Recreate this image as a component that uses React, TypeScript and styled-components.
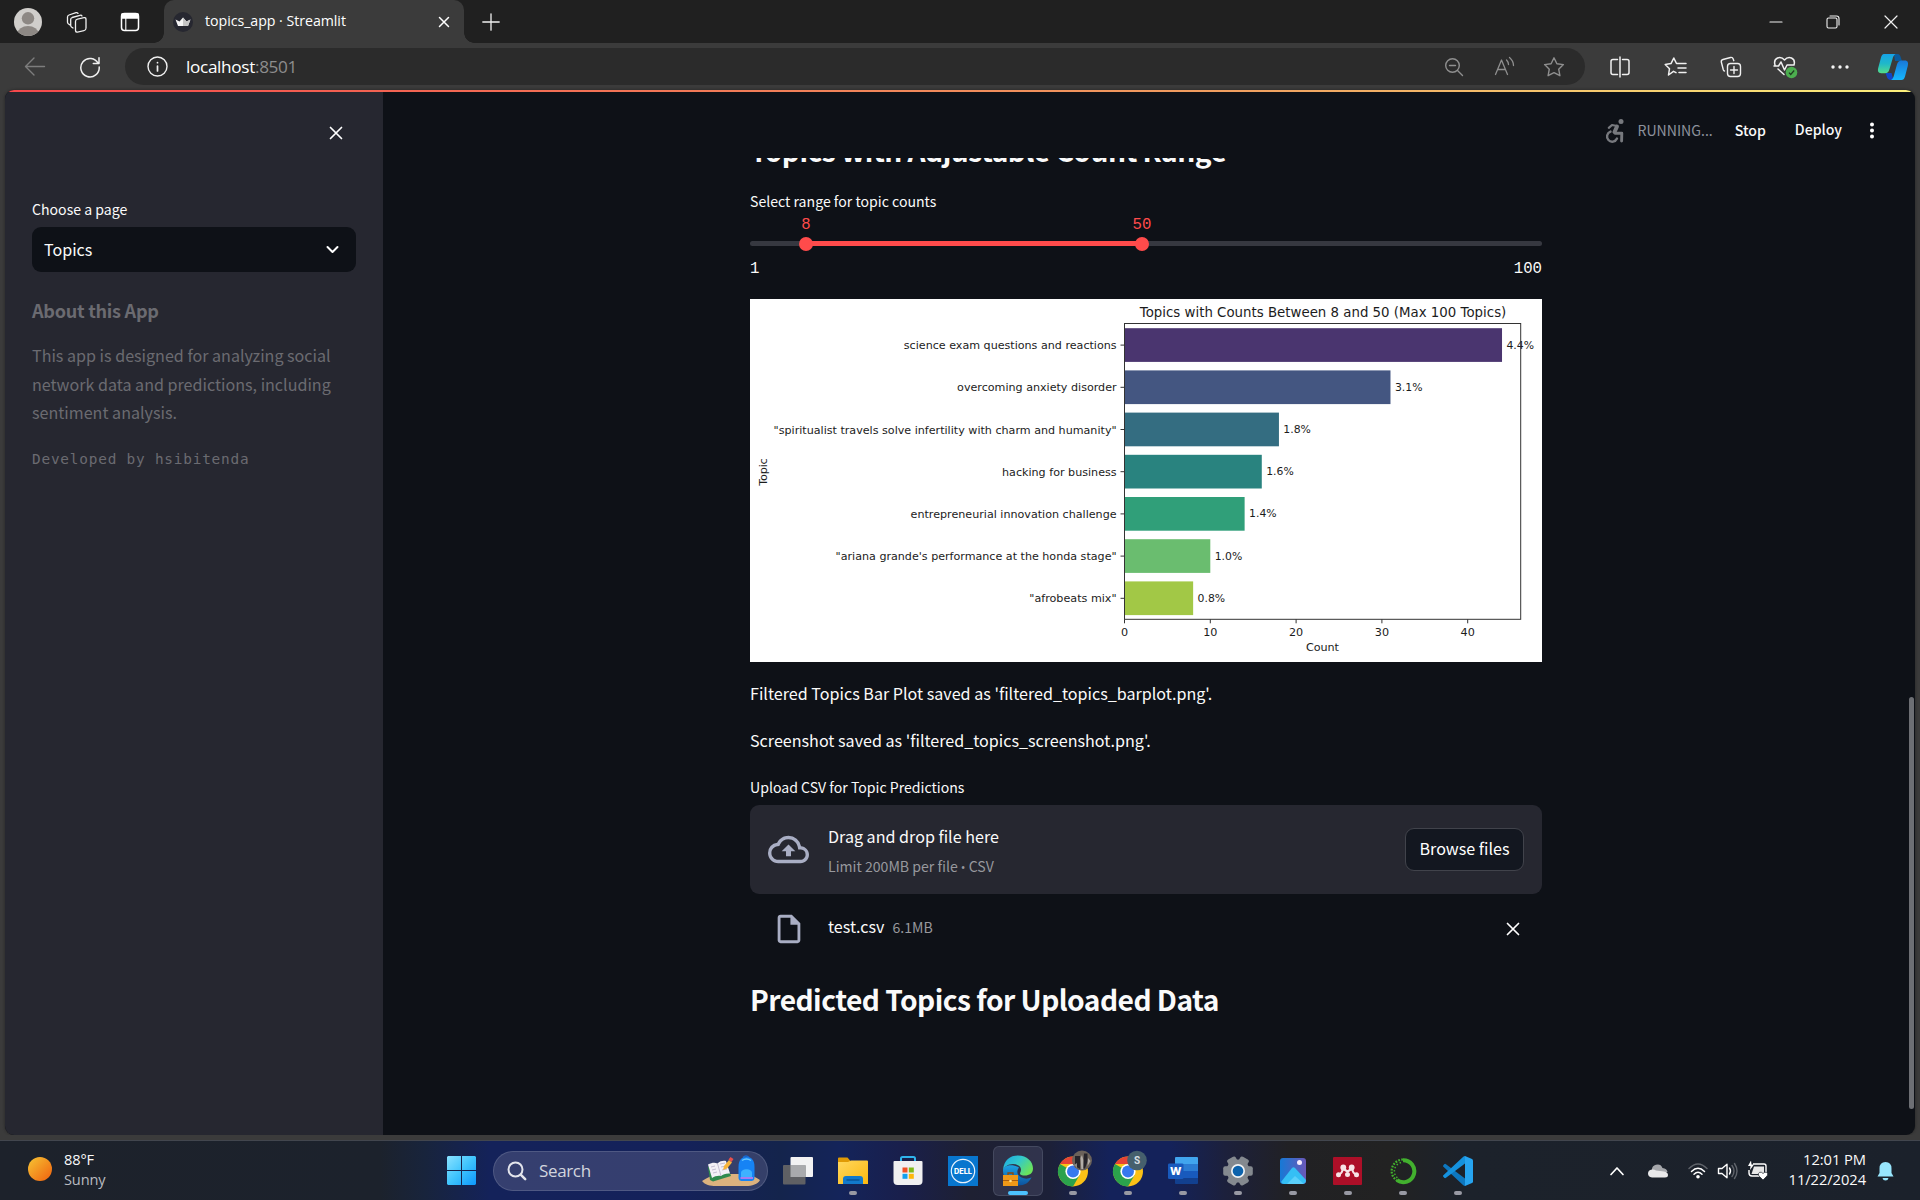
import React from "react";
import styled, { createGlobalStyle } from "styled-components";

const SOURCE = `"Noto Sans CJK SC", "Noto Sans", sans-serif`;
const SEGOE = `"Open Sans", "Noto Sans", sans-serif`;
const MONO = `"DejaVu Sans Mono", monospace`;
const DIGITS = `"Liberation Mono", monospace`;

const Global = createGlobalStyle`
  *, *::before, *::after { box-sizing: border-box; }
  html, body { margin: 0; padding: 0; background: #3b3b3b; overflow: hidden; }
  svg { display: block; flex: none; }
`;

const Screen = styled.div`
  width: 1920px;
  height: 1200px;
  display: flex;
  flex-direction: column;
  overflow: hidden;
  background: #3b3b3b;
  color: #fafafa;
  font-family: ${SOURCE};
`;

/* ---------- browser chrome ---------- */

const TabStrip = styled.div`
  height: 43px;
  flex: none;
  display: flex;
  align-items: stretch;
  background: #202020;
`;

const StripIcon = styled.div<{ $w: number }>`
  width: ${(p) => p.$w}px;
  flex: none;
  display: flex;
  align-items: center;
  justify-content: center;
`;

const Tab = styled.div`
  position: relative;
  width: 300px;
  display: flex;
  align-items: center;
  padding: 0 14px 0 9px;
  background: #3b3b3b;
  border-radius: 10px 10px 0 0;
  &::before,
  &::after {
    content: "";
    position: absolute;
    bottom: 0;
    width: 10px;
    height: 10px;
  }
  &::before {
    left: -10px;
    background: radial-gradient(circle at 0 0, transparent 9.5px, #3b3b3b 10px);
  }
  &::after {
    right: -10px;
    background: radial-gradient(circle at 100% 0, transparent 9.5px, #3b3b3b 10px);
  }
`;

const TabTitle = styled.span`
  flex: 1;
  margin-left: 12px;
  font: 14.2px/20px ${SEGOE};
  letter-spacing: -0.04px;
  color: #fff;
  white-space: nowrap;
  padding-bottom: 2px;
`;

const WindowButtons = styled.div`
  margin-left: auto;
  display: flex;
`;

const Toolbar = styled.div`
  height: 47px;
  flex: none;
  display: flex;
  align-items: center;
`;

const AddressBar = styled.div`
  width: 1460px;
  height: 37px;
  border-radius: 19px;
  background: #2b2b2b;
  display: flex;
  align-items: center;
  padding: 0 7px 0 22px;
`;

const Url = styled.span`
  flex: 1;
  margin-left: 18px;
  font: 17.2px/24px ${SEGOE};
  letter-spacing: -0.34px;
  color: #fff;
  em {
    font-style: normal;
    color: #8d8d8d;
  }
`;

/* ---------- page frame ---------- */

const Frame = styled.div`
  height: 1045px;
  flex: none;
  margin: 0 5px;
  border-radius: 9px;
  overflow: hidden;
  display: grid;
  grid-template-columns: 378px 1fr;
  grid-template-rows: 2px 1fr;
  background: #0e1117;
  box-shadow: 0 0 3px #222;
`;

const Decoration = styled.div`
  grid-column: 1 / 3;
  background: linear-gradient(90deg, #f4484c, #f0a060 65%, #fbf07c);
`;

const Sidebar = styled.aside`
  background: #262730;
  display: flex;
  flex-direction: column;
  padding: 0 27px;
`;

const SidebarTop = styled.div`
  height: 105px;
  display: flex;
  justify-content: flex-end;
  padding: 34px 13px 0 0;
`;

const Label = styled.div<{ $top?: number }>`
  margin-top: ${(p) => p.$top ?? 0}px;
  font-size: 14.1px;
  line-height: 24px;
  white-space: nowrap;
`;

const Select = styled.div`
  margin-top: 6px;
  height: 45px;
  border-radius: 9px;
  background: #0e1117;
  display: flex;
  align-items: center;
  justify-content: space-between;
  padding: 0 17px 1px 12px;
  font-size: 16.1px;
  line-height: 28px;
`;

const SideTitle = styled.div`
  margin-top: 24px;
  font-size: 18.1px;
  font-weight: 700;
  line-height: 28px;
  letter-spacing: -0.27px;
  color: #6b6b71;
`;

const SideText = styled.div`
  margin-top: 17px;
  font-size: 16.1px;
  line-height: 28.6px;
  color: #6b6b71;
  white-space: nowrap;
`;

const SideCode = styled.div`
  margin-top: 20px;
  font: 14.4px/24px ${MONO};
  letter-spacing: 0.79px;
  color: #6b6b71;
  white-space: nowrap;
`;

const Main = styled.main`
  display: grid;
  grid-template-rows: 66px 1fr;
  grid-template-columns: 1fr 6px;
  min-height: 0;
`;

const Header = styled.header`
  grid-column: 1 / 3;
  display: flex;
  justify-content: flex-end;
  align-items: flex-start;
  padding: 22px 41px 0 0;
  font-size: 14.1px;
  line-height: 32px;
`;

const RunIcon = styled.div`
  padding-top: 5px;
`;

const Running = styled.span`
  margin-left: 12px;
  color: #a3a8b4;
  opacity: 0.85;
`;

const HeaderButton = styled.span<{ $left: number; $up?: boolean }>`
  margin-left: ${(p) => p.$left}px;
  font-weight: 500;
  margin-top: ${(p) => (p.$up ? -1 : 0)}px;
`;

const Scroll = styled.div`
  overflow: hidden;
  padding-left: 367px;
`;

const Column = styled.div`
  width: 792px;
  display: flex;
  flex-direction: column;
`;

const Heading = styled.h2<{ $top: number }>`
  margin: ${(p) => p.$top}px 0 0;
  font-size: 28.2px;
  line-height: 38px;
  font-weight: 700;
  letter-spacing: -0.54px;
  white-space: nowrap;
`;

const SliderBox = styled.div`
  height: 86px;
  padding-top: 28px;
`;

const Track = styled.div`
  position: relative;
  height: 5px;
  border-radius: 3px;
  background: linear-gradient(90deg, #363840 7.07%, #ff4b4b 7.07%, #ff4b4b 49.5%, #363840 49.5%);
`;

const Thumb = styled.div`
  position: absolute;
  top: 50%;
  width: 14px;
  height: 14px;
  border-radius: 50%;
  background: #ff4b4b;
  transform: translate(-50%, -50%);
`;

const ThumbValue = styled.span`
  position: absolute;
  left: 50%;
  bottom: 16px;
  transform: translateX(-50%);
  font: 15.7px/20px ${DIGITS};
  color: #ff4b4b;
`;

const Bounds = styled.div`
  margin-top: 13px;
  display: flex;
  justify-content: space-between;
  font: 15.7px/20px ${DIGITS};
`;

const Paragraph = styled.div<{ $top: number }>`
  margin-top: ${(p) => p.$top}px;
  font-size: 16.1px;
  line-height: 29px;
  letter-spacing: 0.01px;
  white-space: nowrap;
`;

const DropZone = styled.div`
  margin-top: 6px;
  height: 89px;
  border-radius: 9px;
  background: #262730;
  display: flex;
  align-items: center;
  padding: 0 18px;
`;

const DropText = styled.div`
  flex: 1;
  margin-left: 19px;
  display: flex;
  flex-direction: column;
  gap: 6px;
`;

const DropTitle = styled.div`
  font-size: 16.1px;
  line-height: 26px;
`;

const Muted = styled.span`
  font-size: 14.1px;
  line-height: 22px;
  color: #97989d;
`;

const Bullet = styled.span`
  font-family: "Open Sans", sans-serif;
  font-size: 12.5px;
  line-height: 1;
`;

const Browse = styled.button`
  width: 119px;
  height: 43px;
  padding: 0 0 3px;
  border-radius: 9px;
  border: 1px solid #41434b;
  background: #131720;
  color: #fff;
  font: 16.1px/28px ${SOURCE};
`;

const FileRow = styled.div`
  height: 71px;
  display: flex;
  align-items: center;
  padding: 0 22px 1px;
`;

const FileName = styled.div`
  flex: 1;
  display: flex;
  align-items: baseline;
  gap: 8px;
  margin-left: 22px;
  padding-bottom: 6px;
  font-size: 16.1px;
  line-height: 24px;
`;

const ScrollRail = styled.div`
  display: flex;
  padding-top: 539px;
`;

const ScrollThumb = styled.div`
  width: 5px;
  height: 412px;
  border-radius: 2.5px;
  background: #6d6f74;
`;

/* ---------- taskbar ---------- */

const Edge = styled.div`
  flex: 1;
  min-height: 5px;
  background: #3b3b3b;
`;

const Taskbar = styled.div`
  height: 60px;
  flex: none;
  border-top: 1px solid #42464e;
  display: flex;
  align-items: center;
  font-family: ${SEGOE};
  background: linear-gradient(
    90deg,
    #1d222b 0, #1c222c 380px, #18243c 425px, #14225a 490px, #14215a 680px, #14244c 780px,
    #14245a 840px, #191f4c 900px, #1e2032 970px, #1c2038 1050px, #14225a 1110px,
    #14225a 1170px, #1c203c 1225px, #212124 1290px, #222222 1390px, #1c222b 1460px, #1b212b 1920px
  );
`;

const Weather = styled.div`
  width: 434px;
  display: flex;
  align-items: center;
  padding: 0 0 3px 28px;
`;

const WeatherText = styled.div`
  margin-left: 12px;
  font-size: 14.6px;
  line-height: 20px;
  letter-spacing: -0.15px;
  span {
    color: #b9bbc0;
  }
`;

const Search = styled.div`
  width: 275px;
  height: 40px;
  border-radius: 20px;
  margin: 0 2px 0 4px;
  background: rgba(86, 92, 132, 0.5);
  border: 1px solid rgba(130, 138, 170, 0.35);
  display: flex;
  align-items: center;
  padding: 0 7px 0 13px;
  font-size: 17px;
  color: #d2d5de;
  span {
    flex: 1;
    margin-left: 12px;
    letter-spacing: -0.35px;
    padding-bottom: 1px;
  }
`;

const AppSlot = styled.div<{ $active?: boolean }>`
  position: relative;
  width: 50px;
  height: 50px;
  margin: 0 2.5px;
  flex: none;
  border-radius: 6px;
  display: flex;
  align-items: center;
  justify-content: center;
  background: ${(p) => (p.$active ? "rgba(90, 94, 120, .32)" : "transparent")};
  border: 1px solid ${(p) => (p.$active ? "rgba(110, 114, 135, .35)" : "transparent")};
`;

const Indicator = styled.i<{ $active?: boolean }>`
  position: absolute;
  bottom: 0;
  left: 50%;
  transform: translateX(-50%);
  width: ${(p) => (p.$active ? 20 : 8)}px;
  height: 4px;
  border-radius: 2px;
  background: ${(p) => (p.$active ? "#4cc2ff" : "#9899a3")};
`;

const Tray = styled.div`
  margin-left: auto;
  display: flex;
  align-items: center;
  padding-right: 15px;
`;

const Clock = styled.div`
  width: 89px;
  text-align: right;
  font-size: 14.7px;
  line-height: 20px;
  letter-spacing: -0.05px;
  padding-bottom: 3px;
  white-space: nowrap;
`;

/* ---------- small drawings ---------- */

type Stroke = { w?: number; h?: number; vb?: string; c?: string; sw?: number; children: React.ReactNode };
const Line = ({ w = 24, h, vb, c = "#f0f0f0", sw = 1.4, children }: Stroke) => (
  <svg width={w} height={h ?? w} viewBox={vb ?? `0 0 ${w} ${h ?? w}`} fill="none" stroke={c}
    strokeWidth={sw} strokeLinecap="round" strokeLinejoin="round">{children}</svg>
);

const Cross = ({ size = 12, sw = 1.7 }: { size?: number; sw?: number }) => (
  <Line w={size + 2} sw={sw} c="#fff"><path d={`M1.5 1.5L${size + 0.5} ${size + 0.5}M${size + 0.5} 1.5L1.5 ${size + 0.5}`} /></Line>
);

const STAR = "M11 1.800l2.900 6 6.500.8-4.700 4.600 1.200 6.500-5.900-3.100-5.900 3.100 1.200-6.500L1.600 8.600l6.500-.8z";

const Copilot = () => (
  <svg width="32" height="28" viewBox="0 0 32 28">
    <defs>
      <linearGradient id="cpA" x1="0" y1="0" x2="0" y2="1"><stop stopColor="#16a3e8" /><stop offset=".5" stopColor="#1fb8c9" /><stop offset="1" stopColor="#53dc8a" /></linearGradient>
      <linearGradient id="cpB" x1="0" y1="0" x2="0" y2="1"><stop stopColor="#1877d8" /><stop offset="1" stopColor="#16b8ff" /></linearGradient>
    </defs>
    <path d="M17 1h3.500c2 0 2.800 1.600 3.200 3.200L25 8h-7z" fill="#0a5a9c" />
    <path d="M7 1h11.500c-1.800 1-2.500 3-3 5l-3 10c-.8 3-2 4.200-4.500 4.200H4.200C1.200 20.200.5 18 1.200 15L4 4.500C4.700 2.200 5.500 1 7 1z" fill="url(#cpA)" />
    <path d="M8.500 20h6l2 7H14c-2.500 0-3.600-1.500-4.200-3.600z" fill="#1246c8" />
    <path d="M25 7.500h2.800c3 0 3.700 2.200 3 5.200L28 23.500c-.7 2.400-1.800 3.500-3.500 3.500H14c1.700-1 2.300-2.500 2.900-4.600l3-10.700c.9-3.200 2.300-4.200 5.100-4.200z" fill="url(#cpB)" />
  </svg>
);

const Wheelchair = () => (
  <svg width="20" height="25" viewBox="0 0 20 25" fill="none" stroke="#77797e" strokeLinecap="round" strokeLinejoin="round">
    <circle cx="16" cy="2.600" r="2.500" fill="#77797e" stroke="none" />
    <path d="M3.800 8.800L7 6l5 1" strokeWidth="2.200" />
    <path d="M12 7.500L9.500 13" strokeWidth="4" />
    <path d="M10 14.200h6.800l-.2 7.800" strokeWidth="2.900" />
    <path d="M5.500 12.600a5.200 5.200 0 1 0 6.500 7" strokeWidth="2.400" />
  </svg>
);

const bars = [
  { t: "science exam questions and reactions", n: 44, p: "4.4%", c: "#4a356f", w: 212.8 },
  { t: "overcoming anxiety disorder", n: 31, p: "3.1%", c: "#445681", w: 159.5 },
  { t: '"spiritualist travels solve infertility with charm and humanity"', n: 18, p: "1.8%", c: "#346d81", w: 343 },
  { t: "hacking for business", n: 16, p: "1.6%", c: "#29837f", w: 114.6 },
  { t: "entrepreneurial innovation challenge", n: 14, p: "1.4%", c: "#309f79", w: 206 },
  { t: '"ariana grande\'s performance at the honda stage"', n: 10, p: "1.0%", c: "#6abd6f", w: 281 },
  { t: '"afrobeats mix"', n: 8, p: "0.8%", c: "#a2c846", w: 87.3 },
];

const Chart = () => (
  <svg width="792" height="363" viewBox="0 0 792 363" fontFamily='"DejaVu Sans", sans-serif' fontSize="11.200" fill="#1c1c1c">
    <rect width="792" height="363" fill="#fff" />
    <text x="389.800" y="18.300" fontSize="13.400" textLength="366.500" lengthAdjust="spacingAndGlyphs">Topics with Counts Between 8 and 50 (Max 100 Topics)</text>
    {bars.map((b, i) => {
      const y = 46.1 + i * 42.2;
      const end = 374.5 + b.n * 8.58;
      return (
        <g key={b.t}>
          <rect x="374.500" y={y - 16.9} width={b.n * 8.58} height="33.700" fill={b.c} />
          <path d={`M370.500 ${y}h4`} stroke="#333" strokeWidth="1" />
          <text x={366.6 - b.w} y={y + 4.1} textLength={b.w} lengthAdjust="spacingAndGlyphs">{b.t}</text>
          <text x={end + 4.4} y={y + 3.4} textLength="27.600" lengthAdjust="spacingAndGlyphs">{b.p}</text>
        </g>
      );
    })}
    <rect x="374.500" y="24.500" width="396.200" height="295.800" fill="none" stroke="#333" strokeWidth="1" />
    {[0, 10, 20, 30, 40].map((n) => (
      <g key={n}>
        <path d={`M${374.5 + n * 8.58} 320.300v4`} stroke="#333" strokeWidth="1" />
        <text x={374.5 + n * 8.58} y="337" textAnchor="middle">{n}</text>
      </g>
    ))}
    <text x="572.500" y="352.300" textAnchor="middle" textLength="32.800">Count</text>
    <text transform="translate(16.600 173) rotate(-90)" textAnchor="middle" textLength="27.500">Topic</text>
  </svg>
);

const WindowsLogo = () => (
  <svg width="29" height="29" viewBox="0 0 29 29">
    <defs><linearGradient id="win" x1="0" y1="0" x2="1" y2="1"><stop stopColor="#8be2ff" /><stop offset=".5" stopColor="#3fc4fd" /><stop offset="1" stopColor="#0d97fb" /></linearGradient></defs>
    <path fill="url(#win)" d="M1 0h13v14H0V1zM15 0h13l1 1v13H15zM0 15h14v14H1l-1-1zM15 15h14v13l-1 1H15z" />
  </svg>
);

const SearchArt = () => (
  <svg width="58" height="32" viewBox="0 0 58 32">
    <path d="M0 26c5-3 10-6 16-7h30c5 1 8 4 12 6-2 4-8 6-14 6H14C8 31 3 30 0 26z" fill="#dcb27e" />
    <path d="M6 12l18-4 5 13-18 5.500-3-1.500z" fill="#2f8a4d" />
    <path d="M6 9.500c4-2 7-2 9.500-1C18 6 21 5.500 24 6l4 12.500c-4-.3-7 .6-9 2.500-3-.5-6 0-9 2z" fill="#f3f0f6" />
    <path d="M15.500 8.500l3.500 12.500M9 12l4-1M10 15l4-1M11 18l4-1M18 9l5-1M19 12l5-1M20 15l5-1" stroke="#b8b0c8" strokeWidth=".8" />
    <path d="M21 15l1-4 5-6 3 2.500-5 6z" fill="#f8b43a" /><path d="M26.500 4.500l2-2.500 3 2-2 3z" fill="#e9504c" />
    <path d="M41 2.500q3-3 6 0" stroke="#1769d2" strokeWidth="1.500" fill="none" />
    <path d="M36.500 12c0-7 3-10 8-10s8 3 8 10v10c0 3-1 4-4 4h-8c-3 0-4-1-4-4z" fill="#1683f5" />
    <path d="M39 18c0-5 11-5 11 0v4H39z" fill="#3eb1ff" /><path d="M38.500 22h12.500v2H38.500z" fill="#a77bf2" /><path d="M40 5.500q4.500-3 9 0" stroke="#69c8ff" strokeWidth="1.500" fill="none" />
  </svg>
);

const TaskView = () => (
  <svg width="30" height="28" viewBox="0 0 30 28">
    <rect x="7.500" width="22.500" height="20" rx="1" fill="#f2f2f3" />
    <rect y="8" width="22.500" height="19.500" rx="1" fill="#5f6064" />
    <path d="M7.500 8h15v12h-15z" fill="#a9aaad" />
  </svg>
);

const Folder = () => (
  <svg width="30" height="27" viewBox="0 0 30 27">
    <defs><linearGradient id="fd" x1="0" y1="0" x2="1" y2="1"><stop stopColor="#ffd75e" /><stop offset="1" stopColor="#fcb80f" /></linearGradient></defs>
    <path d="M0 1.500Q0 .5 1 .5h8.500l3 3.500H12v4H0z" fill="#e09a05" />
    <path d="M0 5h10l3-1.500h16q1 0 1 1V27H0z" fill="url(#fd)" />
    <path d="M5 27v-5q0-3 3-3h14q3 0 3 3v5z" fill="#1279cc" /><path d="M8.500 23h13" stroke="#064c8c" strokeWidth="1.200" />
  </svg>
);

const Store = () => (
  <svg width="30" height="30" viewBox="0 0 30 30">
    <path d="M8 6V2.500Q8 1 9.500 1h11Q22 1 22 2.500V6" fill="none" stroke="#2fb4ec" strokeWidth="2" />
    <path d="M.5 6q0-1 1-1h27q1 0 1 1v19q0 4-4 4h-21q-4 0-4-4z" fill="#f0f0f1" />
    <path d="M9.500 11.500h5v5h-5z" fill="#f05125" /><path d="M15.800 11.500h5v5h-5z" fill="#7fba1a" /><path d="M9.500 17.800h5v5h-5z" fill="#12a0ef" /><path d="M15.800 17.800h5v5h-5z" fill="#fdb70b" />
  </svg>
);

const Dell = () => (
  <svg width="30" height="30" viewBox="0 0 30 30">
    <rect width="30" height="30" fill="#0876ce" /><circle cx="15" cy="15" r="11.700" fill="none" stroke="#e8f3fc" strokeWidth="1.200" />
    <text x="15" y="17.500" textAnchor="middle" textLength="18" lengthAdjust="spacingAndGlyphs" fontFamily="Inter, sans-serif" fontWeight="800" fontSize="7" fill="#fff">DELL</text>
  </svg>
);

const EdgeLogo = () => (
  <svg width="32" height="31" viewBox="0 0 32 31">
    <defs>
      <linearGradient id="eg" x1="0" y1="0" x2="1" y2=".6"><stop stopColor="#1ba6df" /><stop offset=".5" stopColor="#32c8ce" /><stop offset="1" stopColor="#6be35a" /></linearGradient>
      <linearGradient id="eb" x1="0" y1="0" x2="0" y2="1"><stop stopColor="#1da2e4" /><stop offset="1" stopColor="#0c529c" /></linearGradient>
    </defs>
    <path d="M1 15C1 20 3 30 16 30.500c7 0 11-3 13.500-8-5 2.300-11 1-13.500-3-1.300-2.500-.5-5 1-7C12 9 2 9 1 15z" fill="url(#eb)" />
    <path d="M1 15C2 5 8 .5 16 .5c9 0 15 6 15 13 0 5-4 7-8 7-3 0-5-.5-5-2 0-1 1-1.500 1-4C19 11 15 9 11 9c-5 0-9 3-10 6z" fill="url(#eg)" />
    <path d="M1 20h15v11H1z" fill="#ef9918" /><path d="M6 20v-2h5v2" stroke="#8a4a0c" strokeWidth="1.300" fill="none" /><path d="M1 25.500h15" stroke="#a95c0c" strokeWidth="1" /><circle cx="8.500" cy="26" r="1.300" fill="#ffe08a" />
  </svg>
);

const Chrome = ({ badge }: { badge: "photo" | "s" }) => (
  <svg width="38" height="44" viewBox="0 0 38 44">
    <g transform="translate(19 22.500)">
      <circle r="15" fill="#fbc116" />
      <path d="M-13-7.500A15 15 0 0 1 13-7.500H0z" fill="#e64335" />
      <path d="M-13-7.500A15 15 0 0 0 0 15L6.500 3.700 0 0z" fill="#2ba24c" />
      <circle r="7.600" fill="#fff" /><circle r="6" fill="#3678ee" />
    </g>
    <g transform="translate(0 1)">
      {badge === "s" ? (
        <g><circle cx="28" cy="10.500" r="9.800" fill="#46606d" /><text x="28" y="14" textAnchor="middle" fontFamily="Roboto, sans-serif" fontWeight="700" fontSize="10" fill="#d6dee2">S</text></g>
      ) : (
        <g><circle cx="28" cy="10.500" r="10" fill="#6b625a" /><path d="M21 6h5v13l-5-3zM30 3.500h3.500v8l-2.500 7h-2z" fill="#26242a" /><path d="M26.500 8l1.500-3 1.300 5v9h-2zM34 8l2.500 3-3 5z" fill="#b3aea8" /><path d="M20 15l3-2v5z" fill="#888" /></g>
      )}
    </g>
  </svg>
);

const Word = () => (
  <svg width="30" height="28" viewBox="0 0 30 28">
    <path d="M8 0h21q1 0 1 1v6H7V1q0-1 1-1z" fill="#41a5ee" /><path d="M7 7h23v7H7z" fill="#2b7cd3" /><path d="M7 14h23v7H7z" fill="#185abd" /><path d="M7 21h23v5q0 1-1 1H8q-1 0-1-1z" fill="#12408f" />
    <rect y="6.500" width="15.500" height="15.500" rx="1.300" fill="#185abd" />
    <text x="7.800" y="18.200" textAnchor="middle" fontFamily="Inter, sans-serif" fontWeight="800" fontSize="11" textLength="11.500" lengthAdjust="spacingAndGlyphs" fill="#fff">W</text>
  </svg>
);

const Gear = () => (
  <svg width="30" height="30" viewBox="-15 -15 30 30">
    <g fill="#84898f">{[0, 60, 120].map((a) => <rect key={a} x="-14.800" y="-4.800" width="29.600" height="9.600" rx="2" transform={`rotate(${a})`} />)}<circle r="11.500" /></g>
    <circle r="7" fill="#f0f2f4" /><circle r="5.300" fill="#0c62ac" />
  </svg>
);

const Photos = () => (
  <svg width="26" height="26" viewBox="0 0 26 26">
    <defs><linearGradient id="ph" x1="0" y1="0" x2="1" y2="0"><stop stopColor="#1679d6" /><stop offset="1" stopColor="#6a58b8" /></linearGradient></defs>
    <rect width="26" height="26" rx="3" fill="url(#ph)" /><path d="M1 24L12 10q1.500-1.500 3 0l11 12q0 4-4 4H4q-2 0-3-2z" fill="#35bff5" /><path d="M7 26l8-8 9 8z" fill="#7adfff" opacity=".55" /><circle cx="19.500" cy="4.500" r="2.500" fill="#f5ecff" />
  </svg>
);

const Mendeley = () => (
  <svg width="29" height="28" viewBox="0 0 29 28">
    <rect width="29" height="28" rx="1" fill="#ad0f28" />
    <g fill="#f7e4e6"><circle cx="5.500" cy="17.800" r="2.500" /><circle cx="14.500" cy="17.500" r="2.500" /><circle cx="23.500" cy="17.800" r="2.500" /><circle cx="10.300" cy="10.500" r="2.900" /><circle cx="18.700" cy="10.500" r="2.900" /></g>
    <path d="M5.800 17.500q3.500-1 4-6l4.700 3 4.700-3q.5 5 4 6" fill="none" stroke="#f7e4e6" strokeWidth="2.200" strokeLinejoin="round" />
  </svg>
);

const Anaconda = () => (
  <svg width="28" height="28" viewBox="0 0 28 28" fill="none" stroke="#42b02e">
    <path d="M14 3.200A11 11 0 1 1 8 23.200" strokeWidth="4" />
    <path d="M14 2.500A11.500 11.500 0 0 0 8 23.700" strokeWidth="2.200" strokeDasharray="1.800 1.300" /><path d="M12 5.500A9 9 0 0 0 8.500 21" strokeWidth="1.500" strokeDasharray="1.500 2" />
  </svg>
);

const VsCode = () => (
  <svg width="30" height="30" viewBox="0 0 30 30">
    <path d="M22 0l7 3q1 .5 1 1.500v21q0 1-1 1.500l-7 3z" fill="#26a4f0" />
    <path d="M22 7.500v15L3 8.200Q2 7.500 1.200 8.300L.4 9.200q-.8.900 0 1.600L20 29q1 1 2 1z" fill="#0d77bf" />
    <path d="M22 0q-1 0-2 1L.4 19.200q-.8.700 0 1.600l.8.900q.8.800 1.800.1L22 7.500z" fill="#1592de" />
  </svg>
);

const apps: { id: string; icon: React.ReactNode; run?: boolean; active?: boolean }[] = [
  { id: "taskview", icon: <TaskView /> },
  { id: "explorer", icon: <Folder />, run: true },
  { id: "store", icon: <Store /> },
  { id: "dell", icon: <Dell /> },
  { id: "edge", icon: <EdgeLogo />, run: true, active: true },
  { id: "chrome1", icon: <Chrome badge="photo" />, run: true },
  { id: "chrome2", icon: <Chrome badge="s" />, run: true },
  { id: "word", icon: <Word />, run: true },
  { id: "settings", icon: <Gear />, run: true },
  { id: "photos", icon: <Photos />, run: true },
  { id: "mendeley", icon: <Mendeley />, run: true },
  { id: "anaconda", icon: <Anaconda />, run: true },
  { id: "vscode", icon: <VsCode />, run: true },
];

export default function App() {
  return (
    <Screen>
      <Global />
      <TabStrip>
        <StripIcon $w={56}>
          <svg width="28" height="28" viewBox="0 0 28 28">
            <defs><clipPath id="av"><circle cx="14" cy="14" r="14" /></clipPath></defs>
            <circle cx="14" cy="14" r="14" fill="#d0cecb" />
            <g clipPath="url(#av)" fill="#8d8884"><circle cx="14" cy="10.300" r="6.200" /><ellipse cx="14" cy="25.500" rx="10.500" ry="7.500" /></g>
          </svg>
        </StripIcon>
        <StripIcon $w={42}>
          <Line w={22} sw={1.3}><rect x="9.500" y="7" width="10.500" height="13" rx="2" transform="skewY(-12) translate(0 3.500)" /><path d="M7 17l-1.500-1q-.8-.6-.8-1.500V8.500q0-1.500 1.500-2L14 4.300q1.500-.4 2 .7M4 14l-1.700-1.200q-.8-.6-.8-1.500V6q0-1.500 1.500-2L10 1.700q1.300-.4 2 .7" /></Line>
        </StripIcon>
        <StripIcon $w={64}>
          <Line w={20} sw={1.5} c="#fff"><rect x="1.500" y="1.500" width="17" height="17" rx="3" /><path d="M2 2h16v4H2z" fill="#fff" /><path d="M5.800 6v12" strokeWidth="1.100" /></Line>
        </StripIcon>
        <StripIcon $w={2} />
        <Tab>
          <svg width="20" height="20" viewBox="0 0 20 20"><circle cx="10" cy="10" r="10" fill="#262730" /><path d="M2.500 7.500l4 2 3.500-4 3.500 4 4-2-2.500 6.500H5z" fill="#f4f4f4" /><path d="M10 5.500l3.500 4 4-2-2.500 6.500h-5z" fill="#c4c4c4" /></svg>
          <TabTitle>topics_app · Streamlit</TabTitle>
          <Cross size={10} sw={1.5} />
        </Tab>
        <StripIcon $w={53}><Line w={18} sw={1.3}><path d="M9 .8v16.400M.8 9h16.400" /></Line></StripIcon>
        <WindowButtons>
          <StripIcon $w={57}><Line w={14} sw={1.2}><path d="M1 7h12" /></Line></StripIcon>
          <StripIcon $w={58}><Line w={14} sw={1.1}><rect x="1" y="3" width="10" height="10" rx="1.500" /><path d="M4 1h6.500Q13 1 13 3.500V10" /></Line></StripIcon>
          <StripIcon $w={58}><Line w={14} sw={1.2}><path d="M1 1l12 12M13 1L1 13" /></Line></StripIcon>
        </WindowButtons>
      </TabStrip>
      <Toolbar>
        <StripIcon $w={70}><Line w={22} c="#7d7d7d" sw={1.4}><path d="M20.500 10.500H2M10 2L1.500 10.500 10 19" /></Line></StripIcon>
        <StripIcon $w={40}><Line w={22} sw={1.5}><path d="M19.200 7.500A9.200 9.200 0 1 0 20.200 11M20 1.800v5.700h-5.700" /></Line></StripIcon>
        <StripIcon $w={15} />
        <AddressBar>
          <Line w={21} sw={1.4}><circle cx="10.500" cy="10.500" r="9.500" /><path d="M10.500 10v5M10.500 6.500v.2" strokeWidth="1.700" /></Line>
          <Url>localhost<em>:8501</em></Url>
          <StripIcon $w={50}><Line w={20} c="#8f8f8f"><circle cx="8.500" cy="8.500" r="6.800" /><path d="M13.500 13.500l5 5M5.500 8.500h6" /></Line></StripIcon>
          <StripIcon $w={50}><Line w={21} c="#8f8f8f" sw={1.3}><path d="M1.500 18.500L7.500 4l6 14.500M3.700 13.500h7.600M12.500 4q2 2 2 4.500M15.500 1.500q4 3.500 4 8" /></Line></StripIcon>
          <StripIcon $w={49}><Line w={22} c="#8f8f8f"><path d={STAR} /></Line></StripIcon>
        </AddressBar>
        <StripIcon $w={69}><Line w={22} sw={1.5}><path d="M8.500 3.500H4Q2 3.500 2 5.500v11q0 2 2 2h4.500M13.500 3.500H18q2 0 2 2v11q0 2-2 2h-4.500M11 1v20" /></Line></StripIcon>
        <StripIcon $w={43}><Line w={24} sw={1.5}><path d="M12 17.700l-2.500-1.400L4.500 20l1-6.300L1.200 9.500l5.800-.9L9.800 3l2.700 5.500H22M14 13h8M15 17.500h7" /></Line></StripIcon>
        <StripIcon $w={67}><Line w={22} sw={1.4}><rect x="7.500" y="7.500" width="13" height="13" rx="3" /><path d="M14 10.500v7M10.500 14h7M4.500 15Q3.700 15 3.300 13.700L1.300 6Q1 4 3 3.500L10.500 1.500q2-.5 2.700 1.500l.6 1.700" /></Line></StripIcon>
        <StripIcon $w={44}>
          <svg width="26" height="24" viewBox="0 0 26 24"><path d="M2 10Q.5 5 4.500 3 8.500 1.500 11.500 5 14.500 1.500 18.500 3 22.500 5 21 10M1 11h4.500L8 7l3.500 8 2.500-5h7M5 14l6 5.500" fill="none" stroke="#f0f0f0" strokeWidth="1.500" strokeLinecap="round" strokeLinejoin="round" /><circle cx="18.500" cy="17.500" r="5.800" fill="#4cae4f" /><path d="M16 17.700l1.700 1.800 3.500-4" stroke="#1f3a20" strokeWidth="1.200" fill="none" /></svg>
        </StripIcon>
        <StripIcon $w={64}><svg width="18" height="4" viewBox="0 0 18 4" fill="#f5f5f5"><circle cx="2" cy="2" r="1.700" /><circle cx="9" cy="2" r="1.700" /><circle cx="16" cy="2" r="1.700" /></svg></StripIcon>
        <StripIcon $w={42}><Copilot /></StripIcon>
      </Toolbar>

      <Frame>
        <Decoration />
        <Sidebar>
          <SidebarTop><Cross /></SidebarTop>
          <Label>Choose a page</Label>
          <Select>Topics<Line w={13} h={9} c="#fff" sw={2}><path d="M1.500 2l5 5 5-5" /></Line></Select>
          <SideTitle>About this App</SideTitle>
          <SideText>This app is designed for analyzing social<br />network data and predictions, including<br />sentiment analysis.</SideText>
          <SideCode>Developed by hsibitenda</SideCode>
        </Sidebar>
        <Main>
          <Header>
            <RunIcon><Wheelchair /></RunIcon>
            <Running>RUNNING...</Running>
            <HeaderButton $left={22}>Stop</HeaderButton>
            <HeaderButton $left={29} $up>Deploy</HeaderButton>
            <HeaderButton $left={28}><svg width="4" height="32" viewBox="0 0 4 32" fill="#fff"><circle cx="2" cy="10.500" r="2" /><circle cx="2" cy="16.500" r="2" /><circle cx="2" cy="22.500" r="2" /></svg></HeaderButton>
          </Header>
          <Scroll>
            <Column>
              <Heading $top={-27}>Topics with Adjustable Count Range</Heading>
              <Label $top={20}>Select range for topic counts</Label>
              <SliderBox>
                <Track>
                  {[8, 50].map((v) => (
                    <Thumb key={v} style={{ left: `${((v - 1) / 99) * 100}%` }}><ThumbValue>{v}</ThumbValue></Thumb>
                  ))}
                </Track>
                <Bounds><span>1</span><span>100</span></Bounds>
              </SliderBox>
              <Chart />
              <Paragraph $top={17}>Filtered Topics Bar Plot saved as 'filtered_topics_barplot.png'.</Paragraph>
              <Paragraph $top={18}>Screenshot saved as 'filtered_topics_screenshot.png'.</Paragraph>
              <Label $top={20}>Upload CSV for Topic Predictions</Label>
              <DropZone>
                <svg width="41" height="41" viewBox="0 0 24 24" fill="#a9aec4"><path d="M19.350 10.040A7.490 7.490 0 0 0 12 4C9.110 4 6.600 5.640 5.350 8.040A5.994 5.994 0 0 0 0 14c0 3.310 2.690 6 6 6h13c2.760 0 5-2.240 5-5 0-2.640-2.050-4.780-4.650-4.960zM19 18H6c-2.210 0-4-1.790-4-4 0-2.050 1.530-3.760 3.560-3.970l1.070-.11.5-.95A5.469 5.469 0 0 1 12 6c2.620 0 4.880 1.860 5.390 4.430l.3 1.500 1.530.11A2.980 2.980 0 0 1 22 15c0 1.650-1.350 3-3 3zM8 13h2.550v3h2.900v-3H16l-4-4z" /></svg>
                <DropText>
                  <DropTitle>Drag and drop file here</DropTitle>
                  <Muted>Limit 200MB per file <Bullet>•</Bullet> CSV</Muted>
                </DropText>
                <Browse>Browse files</Browse>
              </DropZone>
              <FileRow>
                <svg width="34" height="34" viewBox="0 0 24 24" fill="#a9aec4"><path d="M14 2H6c-1.100 0-2 .9-2 2v16c0 1.100.9 2 2 2h12c1.100 0 2-.9 2-2V8l-6-6zM6 20V4h7v5h5v11H6z" /></svg>
                <FileName>test.csv<Muted>6.1MB</Muted></FileName>
                <Cross />
              </FileRow>
              <Heading $top={15}>Predicted Topics for Uploaded Data</Heading>
            </Column>
          </Scroll>
          <ScrollRail><ScrollThumb /></ScrollRail>
        </Main>
      </Frame>
      <Edge />

      <Taskbar>
        <Weather>
          <svg width="24" height="24" viewBox="0 0 24 24"><defs><linearGradient id="sun" x1="0" y1="0" x2="1" y2="1"><stop stopColor="#f6c534" /><stop offset="1" stopColor="#f0600e" /></linearGradient></defs><circle cx="12" cy="12" r="12" fill="url(#sun)" /></svg>
          <WeatherText>88°F<br /><span>Sunny</span></WeatherText>
        </Weather>
        <AppSlot><WindowsLogo /></AppSlot>
        <Search>
          <Line w={20} c="#e3e5ec" sw={2}><circle cx="8.500" cy="8.500" r="7" /><path d="M13.700 13.700l4.500 4.500" strokeWidth="2.500" /></Line>
          <span>Search</span>
          <SearchArt />
        </Search>
        {apps.map((a) => (
          <AppSlot key={a.id} $active={a.active}>
            {a.icon}
            {a.run && <Indicator $active={a.active} />}
          </AppSlot>
        ))}
        <Tray>
          <StripIcon $w={40}><Line w={16} h={10} c="#fff" sw={1.7}><path d="M2 8.500l6-6.500 6 6.500" /></Line></StripIcon>
          <StripIcon $w={41}><svg width="20" height="14" viewBox="0 0 20 14"><path d="M4 7a5.500 5.500 0 0 1 10.500-3Q19 4.500 19.500 8L10 11z" fill="#a5a7ab" /><path d="M4 13.500Q0 13 0 9.500 0 6 4 5.500q2-.5 4 1l8 1q4 .5 4 3.500 0 2.500-3 2.500z" fill="#e9e9ea" /></svg></StripIcon>
          <StripIcon $w={39}><svg width="20" height="16" viewBox="0 0 20 16" fill="none" strokeLinecap="round"><path d="M1 5.500Q10-3.500 19 5.500" stroke="#60646b" strokeWidth="1.400" /><path d="M3.500 8.500q6.500-6.500 13 0M6 11.300q4-4 8 0" stroke="#fff" strokeWidth="1.500" /><circle cx="10" cy="13.800" r="1.800" fill="#fff" /></svg></StripIcon>
          <StripIcon $w={21}><Line w={21} h={18} c="#fff" sw={1.4}><path d="M1.500 6.500H5l5-4.300v13.600l-5-4.300H1.500z" /><path d="M12.500 6q2 3 0 6" /><path d="M15 3.500q4 5.500 0 11M17.500 1.500q5 7.500 0 15" stroke="#60646b" /></Line></StripIcon>
          <StripIcon $w={39}><svg width="22" height="20" viewBox="0 0 22 20"><path d="M6 3h11q2 0 2 2v8q0 2-2 2H5q-3 0-3-3V9" fill="none" stroke="#fff" strokeWidth="1.400" /><path d="M7 5.500h10v7.500H4.500z" fill="#e8e8e8" /><path d="M4-.5L1 5h2.500L3 9l4-5.500H4.500z" fill="#fff" /><path d="M16 19l-4.200-4.200q-1.300-2.300.8-3.500 2-.6 3.400 1.200 1.500-1.800 3.500-1.200 2 1.300.7 3.500z" fill="#fff" stroke="#1b212b" strokeWidth=".7" /></svg></StripIcon>
          <Clock>12:01 PM<br />11/22/2024</Clock>
          <StripIcon $w={39}><svg width="17" height="20" viewBox="0 0 17 20" fill="#98e6fd"><path d="M2.500 7.500Q2.500 1 8.500 1t6 6.500v4.500l2 3.500H.5l2-3.500zM5.500 17h6q-.5 2.500-3 2.500T5.500 17z" /></svg></StripIcon>
        </Tray>
      </Taskbar>
    </Screen>
  );
}
